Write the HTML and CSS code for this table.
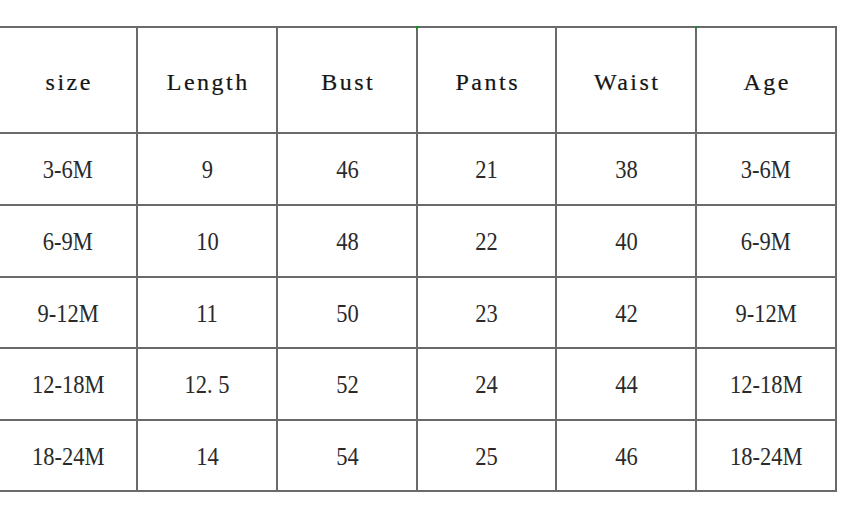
FILE: index.html
```html
<!DOCTYPE html>
<html>
<head>
<meta charset="utf-8">
<link rel="stylesheet" href="styles.css">
</head>
<body>
<div class="page">
  <div class="chart">
    <div class="cell head">size</div>
    <div class="cell head">Length</div>
    <div class="cell head">Bust</div>
    <div class="cell head mark">Pants</div>
    <div class="cell head">Waist</div>
    <div class="cell head mark">Age</div>

    <div class="cell"><span class="val">3-6M</span></div><div class="cell"><span class="val">9</span></div><div class="cell"><span class="val">46</span></div><div class="cell"><span class="val">21</span></div><div class="cell"><span class="val">38</span></div><div class="cell"><span class="val">3-6M</span></div>
    <div class="cell"><span class="val">6-9M</span></div><div class="cell"><span class="val">10</span></div><div class="cell"><span class="val">48</span></div><div class="cell"><span class="val">22</span></div><div class="cell"><span class="val">40</span></div><div class="cell"><span class="val">6-9M</span></div>
    <div class="cell"><span class="val">9-12M</span></div><div class="cell"><span class="val">11</span></div><div class="cell"><span class="val">50</span></div><div class="cell"><span class="val">23</span></div><div class="cell"><span class="val">42</span></div><div class="cell"><span class="val">9-12M</span></div>
    <div class="cell"><span class="val">12-18M</span></div><div class="cell"><span class="val">12. 5</span></div><div class="cell"><span class="val">52</span></div><div class="cell"><span class="val">24</span></div><div class="cell"><span class="val">44</span></div><div class="cell"><span class="val">12-18M</span></div>
    <div class="cell"><span class="val">18-24M</span></div><div class="cell"><span class="val">14</span></div><div class="cell"><span class="val">54</span></div><div class="cell"><span class="val">25</span></div><div class="cell"><span class="val">46</span></div><div class="cell"><span class="val">18-24M</span></div>
  </div>
</div>
</body>
</html>
```

FILE: styles.css
```css
html, body {
  margin: 0;
  padding: 0;
  background: #ffffff;
}

.page {
  width: 841px;
  height: 526px;
  padding-top: 26px;
  box-sizing: border-box;
  overflow: hidden;
}

.chart {
  display: grid;
  grid-template-columns: 138px 140px 140px 139px 140px 140px;
  grid-template-rows: 106px 72px 72px 71px 72px 71px;
  width: 837px;
  border-top: 2px solid #6a6a6a;
}

.cell {
  position: relative;
  display: flex;
  align-items: center;
  justify-content: center;
  border-right: 2px solid #6a6a6a;
  border-bottom: 2px solid #6a6a6a;
  font-family: "Liberation Serif", "Times New Roman", serif;
  font-size: 25px;
  color: #2a2a2a;
  padding-top: 2px;
}

.val {
  display: inline-block;
  transform: scaleX(0.9);
  white-space: pre;
}

.cell.head {
  font-size: 24px;
  letter-spacing: 2.5px;
  text-indent: 2.5px;
  color: #151515;
  -webkit-text-stroke: 0.2px #151515;
  padding-top: 5px;
}

.mark::before {
  content: "";
  position: absolute;
  left: -2px;
  top: -2px;
  width: 0;
  height: 0;
  border-top: 4px solid #1f8a2a;
  border-right: 4px solid transparent;
}
```
